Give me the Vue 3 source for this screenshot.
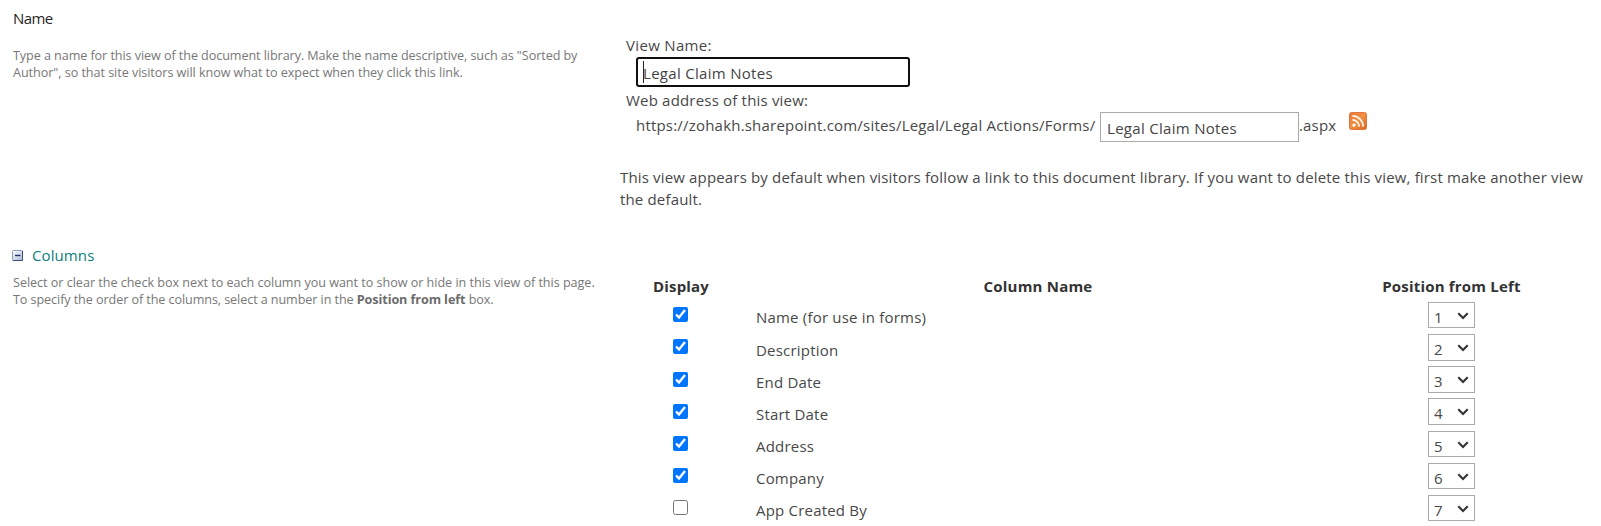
<script setup>
import { ref } from 'vue'

const viewName = ref('Legal Claim Notes')
const fileName = ref('Legal Claim Notes')
const columns = ref([
  { name: 'Name (for use in forms)', shown: true },
  { name: 'Description', shown: true },
  { name: 'End Date', shown: true },
  { name: 'Start Date', shown: true },
  { name: 'Address', shown: true },
  { name: 'Company', shown: true },
  { name: 'App Created By', shown: false },
])
</script>

<template>
  <main class="page">
    <section class="section name-section">
      <div class="info">
        <h2 class="title">Name</h2>
        <p class="hint">
          Type a name for this view of the document library. Make the name descriptive, such as "Sorted by<br />
          <span class="hint-tail">Author", so that site visitors will know what to expect when they click this link.</span>
        </p>
      </div>
      <div class="fields">
        <label class="label label-view">View Name:</label>
        <div class="focus-field">
          <input v-model="viewName" class="input input-focus" type="text" />
          <span class="caret"></span>
        </div>
        <label class="label label-web">Web address of this view:</label>
        <div class="url-row">
          <span class="url">https://zohakh.sharepoint.com/sites/Legal/Legal Actions/Forms/</span>
          <input v-model="fileName" class="input input-file" type="text" />
          <span class="ext">.aspx</span>
          <svg class="rss" width="18" height="18" viewBox="0 0 18 18">
            <defs>
              <linearGradient id="rssFill" x1="0" y1="0" x2="1" y2="1">
                <stop offset="0" stop-color="#e8793f" />
                <stop offset="0.5" stop-color="#f08f42" />
                <stop offset="1" stop-color="#dc6420" />
              </linearGradient>
            </defs>
            <rect x="0.5" y="0.5" width="17" height="17" rx="2" fill="url(#rssFill)" stroke="#e0763c" />
            <circle cx="5" cy="13.1" r="1.7" fill="#fff" />
            <path d="M3.4 7.9a6.6 6.6 0 0 1 6.6 6.9M3.4 3.9a10.8 10.8 0 0 1 10.8 10.9" fill="none" stroke="#fff6ea" stroke-width="1.7" />
          </svg>
        </div>
        <p class="note">
          This view appears by default when visitors follow a link to this document library. If you want to delete this view, first make another view<br />the default.
        </p>
      </div>
    </section>

    <section class="section">
      <div class="info">
        <h2 class="title toggle">
          <svg class="minus" width="11" height="11" viewBox="0 0 11 11">
            <defs>
              <linearGradient id="minusFill" x1="0" y1="0" x2="1" y2="1">
                <stop offset="0" stop-color="#ffffff" />
                <stop offset="1" stop-color="#a9b9d6" />
              </linearGradient>
            </defs>
            <rect x="0.5" y="0.5" width="10" height="10" rx="0.8" fill="url(#minusFill)" stroke="#8b9cbd" />
            <path d="M1 10.5H10.5V1" fill="none" stroke="#3c4f7c" />
            <path d="M3 5.5H8.4" stroke="#1f3263" stroke-width="1.4" />
          </svg>
          Columns
        </h2>
        <p class="hint hint-columns">
          Select or clear the check box next to each column you want to show or hide in this view of this page.<br />
          <span class="hint-order">To specify the order of the columns, select a number in the <b>Position from left</b> box.</span>
        </p>
      </div>
      <div class="table">
        <div class="row head">
          <span>Display</span>
          <span>Column Name</span>
          <span>Position from Left</span>
        </div>
        <div v-for="(c, i) in columns" :key="c.name" class="row">
          <input v-model="c.shown" class="check" type="checkbox" />
          <span class="cell">{{ c.name }}</span>
          <div class="select">
            <span>{{ i + 1 }}</span>
            <svg class="chevron" width="12" height="8" viewBox="0 0 12 8">
              <path d="M1.3 1.3L6 6L10.7 1.3" fill="none" stroke="#333" stroke-width="2.1" />
            </svg>
          </div>
        </div>
      </div>
    </section>
  </main>
</template>

<style>
body {
  background: #fff;
  overflow: hidden;
}
</style>

<style scoped>
.page {
  width: 1601px;
  height: 526px;
  overflow: hidden;
  box-sizing: border-box;
  font: 400 15px/22px "Open Sans", "Noto Sans", sans-serif;
  color: #484848;
  letter-spacing: 0.16px;
  white-space: nowrap;
}
.section {
  display: grid;
  grid-template-columns: 620px 1fr;
}
.name-section {
  height: 244px;
}
.info {
  padding-left: 13px;
}
.title {
  margin: 0;
  font-size: 15px;
  font-weight: 400;
  letter-spacing: -0.55px;
  color: #262626;
}
.name-section .title {
  margin-top: 7px;
}
.hint {
  margin: 18px 0 0;
  font-size: 12.6px;
  font-weight: 400;
  line-height: 17px;
  letter-spacing: -0.07px;
  color: #777;
}
.hint-tail {
  letter-spacing: -0.05px;
}
.toggle {
  display: flex;
  align-items: center;
  gap: 9px;
  margin-left: -1px;
  color: #0a7e7b;
  letter-spacing: 0.1px;
}
.hint-columns {
  margin-top: 8px;
  letter-spacing: -0.03px;
}
.hint-order {
  letter-spacing: -0.08px;
}
.hint b {
  font-weight: 700;
  color: #6c6c6c;
}
.fields {
  padding-top: 34px;
}
.label {
  display: block;
  padding-left: 6px;
}
.label-view {
  letter-spacing: 0.33px;
}
.label-web {
  margin-top: 2px;
  letter-spacing: 0.19px;
}
.input {
  display: block;
  box-sizing: border-box;
  height: 30px;
  margin: 0;
  font: inherit;
  color: #444;
  letter-spacing: 0.3px;
  outline: none;
  background: #fff;
}
.focus-field {
  position: relative;
  width: 274px;
  margin: 1px 0 0 16px;
}
.input-focus {
  width: 274px;
  padding: 2px 5px 0;
  border: 2px solid #101010;
  border-radius: 3px;
}
.caret {
  position: absolute;
  left: 7px;
  top: 4px;
  width: 1px;
  height: 22px;
  background: #222;
}
.url-row {
  display: flex;
  height: 30px;
  margin: 1px 0 0 16px;
}
.url {
  width: 464px;
  padding-top: 2px;
  letter-spacing: 0.2px;
}
.input-file {
  width: 199px;
  padding: 2px 6px 0;
  border: 1px solid #ababab;
}
.ext {
  width: 50px;
  padding-top: 2px;
}
.note {
  margin: 24px 0 0;
}
.row {
  display: grid;
  grid-template-columns: 122px 577px 1fr;
  height: 32.17px;
}
.table {
  padding-top: 31px;
}
.head {
  grid-template-columns: 122px 592px 235px;
  height: 25.3px;
  font-weight: 700;
  text-align: center;
  color: #333;
  letter-spacing: 0.2px;
}
.check {
  width: 15px;
  height: 15px;
  margin: 7px 0 0 53px;
}
.cell {
  padding: 6.1px 0 0 14px;
  letter-spacing: 0.2px;
}
.select {
  box-sizing: border-box;
  display: flex;
  width: 47px;
  height: 26.4px;
  margin: 1.7px 0 0 109px;
  padding: 3px 0 0 5px;
  border: 1px solid #ababab;
  letter-spacing: 0;
}
.select span {
  width: 17px;
}
.chevron {
  margin: 6px 0 0 6px;
}
</style>
